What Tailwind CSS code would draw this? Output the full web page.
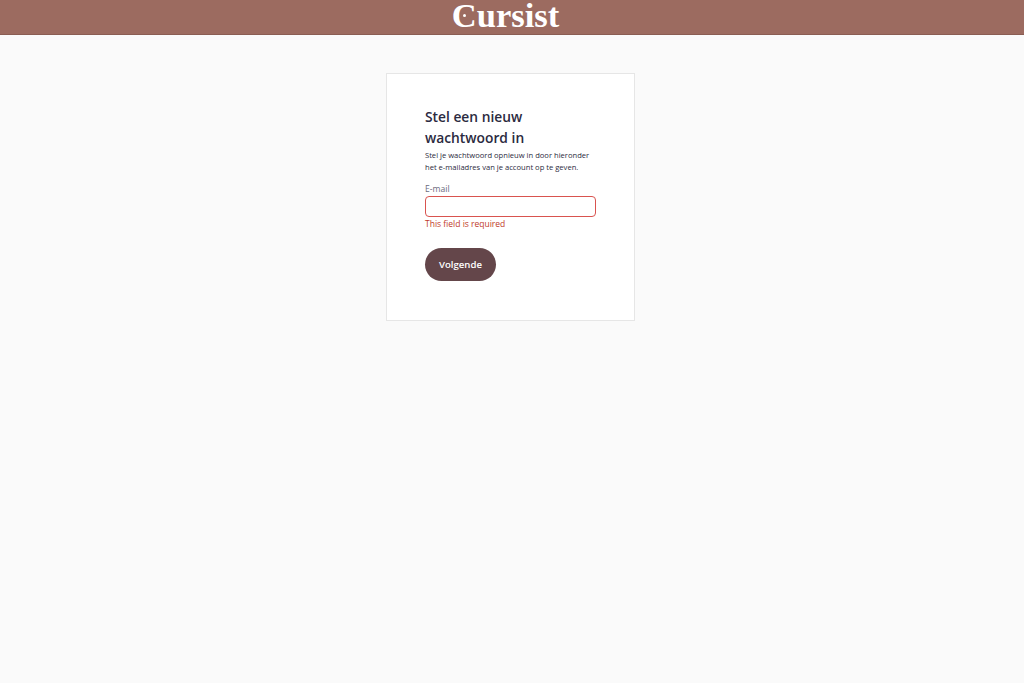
<!DOCTYPE html>
<html lang="nl">
  <head>
    <meta charset="utf-8" />
    <title>Cursist</title>
    <script src="https://cdn.jsdelivr.net/npm/@tailwindcss/browser@4"></script>
  </head>

  <body class="h-screen overflow-hidden bg-[#fafafa] font-['Open_Sans',sans-serif]">
    <!-- Header -->
    <header class="h-[35px] bg-[#9c6b60] border-b border-[#8a5d53] flex justify-center">
      <div class="relative text-[34.6px] leading-[30px] font-bold text-white font-['Liberation_Serif',serif] pr-[13px]">
        Cursist
        <span class="absolute left-[11px] top-[14px] w-[3px] h-[3px] rounded-full bg-white"></span>
      </div>
    </header>

    <!-- Card -->
    <main class="flex justify-center pt-[38px] pr-[3px]">
      <section class="w-[249px] h-[248px] bg-white border border-[#e6e6e6] pl-[38px] pr-[38px] pt-[32px]">
        <h2 class="text-[13.8px] leading-[21px] font-semibold text-[#2b2a40] w-[120px]">Stel een nieuw wachtwoord in</h2>
        <p class="mt-[1px] text-[7.6px] leading-[12px] text-[#2b2a40]">Stel je wachtwoord opnieuw in door hieronder het e-mailadres van je account op te geven.</p>

        <label class="block mt-[9px] text-[8.6px] leading-[14px] text-[#6b6a7d]">E-mail</label>
        <input type="text" class="block w-[171px] h-[21px] bg-white border border-[#d9534f] rounded-[4px]">
        <p class="mt-[1px] text-[8.5px] leading-[12px] text-[#c0392b]">This field is required</p>

        <button class="mt-[18px] w-[71px] h-[33px] pt-[1px] rounded-full bg-[#64464a] text-white text-[9.6px] font-semibold">Volgende</button>
      </section>
    </main>
  </body>
</html>
